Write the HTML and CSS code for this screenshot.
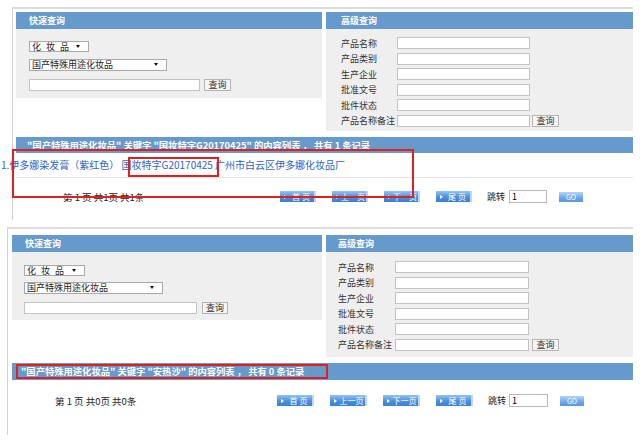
FILE: index.html
```html
<!DOCTYPE html>
<html>
	<head>
	<meta charset="utf-8">
	<title>化妆品查询</title>
	<link rel="stylesheet" href="styles.css">
	</head>

	<body>
		<!-- first search: one record -->
		<div class="shot shot-a">
			<div class="panels">
				<div class="panel panel-quick">
					<div class="panel-head">快速查询</div>
					<div class="panel-body quick-body">
						<div class="sel sel-type"><span class="spaced">化妆品</span></div>
						<div class="sel sel-cat"><span>国产特殊用途化妆品</span></div>
						<div class="search-line">
							<input class="field field-wide" type="text">
							<button class="btn-query">查询</button>
						</div>
					</div>
				</div>
				<div class="panel panel-adv">
					<div class="panel-head">高级查询</div>
					<div class="panel-body adv-body">
						<div class="adv-row"><span class="adv-label">产品名称</span><input class="field" type="text"></div>
						<div class="adv-row"><span class="adv-label">产品类别</span><input class="field" type="text"></div>
						<div class="adv-row"><span class="adv-label">生产企业</span><input class="field" type="text"></div>
						<div class="adv-row"><span class="adv-label">批准文号</span><input class="field" type="text"></div>
						<div class="adv-row"><span class="adv-label">批件状态</span><input class="field" type="text"></div>
						<div class="adv-row"><span class="adv-label">产品名称备注</span><input class="field" type="text"><button class="btn-query">查询</button></div>
					</div>
				</div>
			</div>

			<div class="result-bar">"国产特殊用途化妆品" 关键字 "国妆特字G20170425" 的内容列表 ， 共有 1 条记录</div>

			<div class="result-row">
				<a class="result-link" href="#">1.伊多娜染发膏（紫红色） 国妆特字G20170425 广州市白云区伊多娜化妆品厂</a>
			</div>

			<div class="pager">
				<span class="pg-info">第 1 页 共1页 共1条</span>
				<span class="pg-btn">首 页</span>
				<span class="pg-btn">上一页</span>
				<span class="pg-btn">下一页</span>
				<span class="pg-btn">尾 页</span>
				<span class="pg-jump">跳转</span>
				<input class="pg-input" type="text" value="1">
				<span class="pg-go">GO</span>
			</div>

			<div class="mark mark-row"></div>
			<div class="mark mark-code"></div>
		</div>

		<!-- second search: no records -->
		<div class="shot shot-b">
			<div class="panels">
				<div class="panel panel-quick">
					<div class="panel-head">快速查询</div>
					<div class="panel-body quick-body">
						<div class="sel sel-type"><span class="spaced">化妆品</span></div>
						<div class="sel sel-cat"><span>国产特殊用途化妆品</span></div>
						<div class="search-line">
							<input class="field field-wide" type="text">
							<button class="btn-query">查询</button>
						</div>
					</div>
				</div>
				<div class="panel panel-adv">
					<div class="panel-head">高级查询</div>
					<div class="panel-body adv-body">
						<div class="adv-row"><span class="adv-label">产品名称</span><input class="field" type="text"></div>
						<div class="adv-row"><span class="adv-label">产品类别</span><input class="field" type="text"></div>
						<div class="adv-row"><span class="adv-label">生产企业</span><input class="field" type="text"></div>
						<div class="adv-row"><span class="adv-label">批准文号</span><input class="field" type="text"></div>
						<div class="adv-row"><span class="adv-label">批件状态</span><input class="field" type="text"></div>
						<div class="adv-row"><span class="adv-label">产品名称备注</span><input class="field" type="text"><button class="btn-query">查询</button></div>
					</div>
				</div>
			</div>

			<div class="result-bar">"国产特殊用途化妆品" 关键字 "安热沙" 的内容列表 ， 共有 0 条记录
				<div class="mark mark-bar"></div>
			</div>

			<div class="pager">
				<span class="pg-info">第 1 页 共0页 共0条</span>
				<span class="pg-btn">首 页</span>
				<span class="pg-btn">上一页</span>
				<span class="pg-btn">下一页</span>
				<span class="pg-btn">尾 页</span>
				<span class="pg-jump">跳转</span>
				<input class="pg-input" type="text" value="1">
				<span class="pg-go">GO</span>
			</div>
		</div>
	</body>
</html>
```

FILE: styles.css
```css
body {
	margin: 0;
	padding: 0;
	width: 640px;
	background: #fff;
	font-family: "Noto Sans CJK SC", "Noto Sans", "Liberation Sans", sans-serif;
	font-size: 9px;
	color: #333;
}

.shot {
	position: relative;
	box-sizing: border-box;
	border-top: 2px solid #dcdcdc;
	border-left: 1px solid #cfcfcf;
}

.shot-a {
	margin: 7px 7px 0 12px;
	padding: 3px 0 0 3px;
	height: 213px;
}

.shot-b {
	margin: 7px 7px 0 7px;
	padding: 6px 0 0 4px;
	height: 208px;
}

.panels {
	display: flex;
	align-items: flex-start;
	gap: 4px;
}

.panel-head {
	height: 17px;
	line-height: 17px;
	background: #6699cc;
	color: #fff;
	font-weight: bold;
	font-size: 9px;
}

.panel-body {
	box-sizing: border-box;
	background: #efefef;
}

.shot-a .panel-quick { width: 306px; }
.shot-b .panel-quick { width: 310px; }
.panel-adv { flex: 1; }

.shot-a .panel-quick .panel-head { padding-left: 13px; }
.shot-a .panel-adv .panel-head { padding-left: 15px; }
.shot-b .panel-quick .panel-head { padding-left: 13px; }
.shot-b .panel-adv .panel-head { padding-left: 12px; }

/* quick search */
.quick-body {
	height: 69px;
	padding: 12px 0 0 13px;
}

.shot-b .quick-body {
	height: 68px;
	padding: 13px 0 0 12px;
}

.sel {
	position: relative;
	box-sizing: border-box;
	height: 11px;
	line-height: 9px;
	padding-left: 2px;
	border: 1px solid #a9a9a9;
	background: #fff;
	font-size: 9px;
	color: #222;
}

.sel:after {
	content: "";
	position: absolute;
	right: 8px;
	top: 3px;
	border-left: 2px solid transparent;
	border-right: 2px solid transparent;
	border-top: 3px solid #111;
}

.spaced {
	letter-spacing: 5px;
}

.sel-type { width: 60px; }
.sel-cat { width: 138px; height: 12px; line-height: 10px; margin-top: 7px; }
.shot-b .sel-type { width: 61px; }
.shot-b .sel-cat { width: 139px; margin-top: 6px; }

.search-line {
	display: flex;
	margin-top: 8px;
}

.field {
	box-sizing: border-box;
	width: 133px;
	height: 12px;
	margin: 0;
	padding: 0 2px;
	border: 1px solid #c3c3c3;
	background: #fff;
	font-family: inherit;
	font-size: 9px;
}

.field-wide { width: 171px; }
.shot-b .field-wide { width: 173px; }

.btn-query {
	box-sizing: border-box;
	width: 27px;
	height: 12px;
	margin: 0 0 0 4px;
	padding: 0;
	border: 1px solid #b5b5b5;
	background: #f5f5f5;
	font-family: inherit;
	font-size: 9px;
	line-height: 10px;
	color: #333;
}

.shot-b .search-line .btn-query { width: 26px; margin-left: 5px; }

/* advanced search */
.adv-body {
	height: 102px;
	padding: 8px 0 0 15px;
	display: flex;
	flex-direction: column;
	gap: 3.6px;
}

.shot-b .adv-body {
	height: 105px;
	padding: 9px 0 0 12px;
}

.adv-row {
	display: flex;
	align-items: center;
	height: 12px;
}

.adv-label {
	width: 56px;
	white-space: nowrap;
	color: #333;
}

.shot-b .adv-label { width: 57px; }
.shot-b .adv-body .field { width: 134px; }

.adv-row .btn-query { margin-left: 2px; }
.shot-b .adv-row .btn-query { margin-left: 3px; }

/* results */
.result-bar {
	position: relative;
	margin-top: 6px;
	height: 16px;
	line-height: 16px;
	padding-left: 11px;
	background: #6699cc;
	color: #fff;
	font-weight: bold;
	font-size: 9.3px;
	white-space: nowrap;
}

.shot-b .result-bar {
	height: 17px;
	line-height: 17px;
	padding-left: 9px;
	font-size: 9.3px;
}

.result-row {
	height: 24px;
	line-height: 24px;
	border-bottom: 1px solid #e4e4e4;
	white-space: nowrap;
}

.result-link {
	margin-left: -15px;
	color: #2d64c8;
	text-decoration: none;
	font-size: 10px;
}

/* pager */
.pager {
	display: flex;
	align-items: center;
	height: 13px;
	margin-top: 12px;
}

.shot-b .pager { margin-top: 14px; }

.pg-info {
	width: 217px;
	padding-left: 47px;
	font-size: 9.5px;
	color: #222;
	white-space: nowrap;
}

.shot-b .pg-info {
	width: 222px;
	padding-left: 43px;
}

.pg-btn {
	position: relative;
	box-sizing: border-box;
	width: 36px;
	height: 11px;
	line-height: 11px;
	padding-left: 8px;
	background: linear-gradient(#93c4f3, #4b8fdd 55%, #3a80d2);
	border-right: 2px solid #bcd8f4;
	color: #fff;
	font-size: 8px;
	text-align: center;
	white-space: nowrap;
}

.pg-btn:before {
	content: "";
	position: absolute;
	left: 4px;
	top: 4px;
	border-top: 2px solid transparent;
	border-bottom: 2px solid transparent;
	border-left: 3px solid #fff;
}

.pg-btn + .pg-btn { margin-left: 16px; }
.shot-b .pg-btn { width: 37px; }

.pg-jump {
	margin-left: 15px;
	font-size: 9px;
	color: #222;
}

.pg-input {
	box-sizing: border-box;
	width: 38px;
	height: 13px;
	margin: 0 0 0 4px;
	padding: 0 2px;
	border: 1px solid #b9b9b9;
	font-family: inherit;
	font-size: 9px;
}

.shot-b .pg-input { width: 39px; margin-left: 3px; }

.pg-go {
	width: 24px;
	height: 10px;
	line-height: 10px;
	margin-left: 12px;
	background: linear-gradient(#b4d6f8, #6aa6e6 60%, #5a98de);
	color: #fff;
	font-size: 7px;
	text-align: center;
}

/* red annotation boxes */
.mark {
	position: absolute;
	box-sizing: border-box;
	border: 2px solid #e0201c;
}

.mark-row {
	left: -1px;
	top: 140px;
	width: 402px;
	height: 49px;
}

.mark-code {
	left: 115px;
	top: 148px;
	width: 91px;
	height: 20px;
}

.mark-bar {
	left: 4px;
	top: 1px;
	width: 312px;
	height: 15px;
}
```
